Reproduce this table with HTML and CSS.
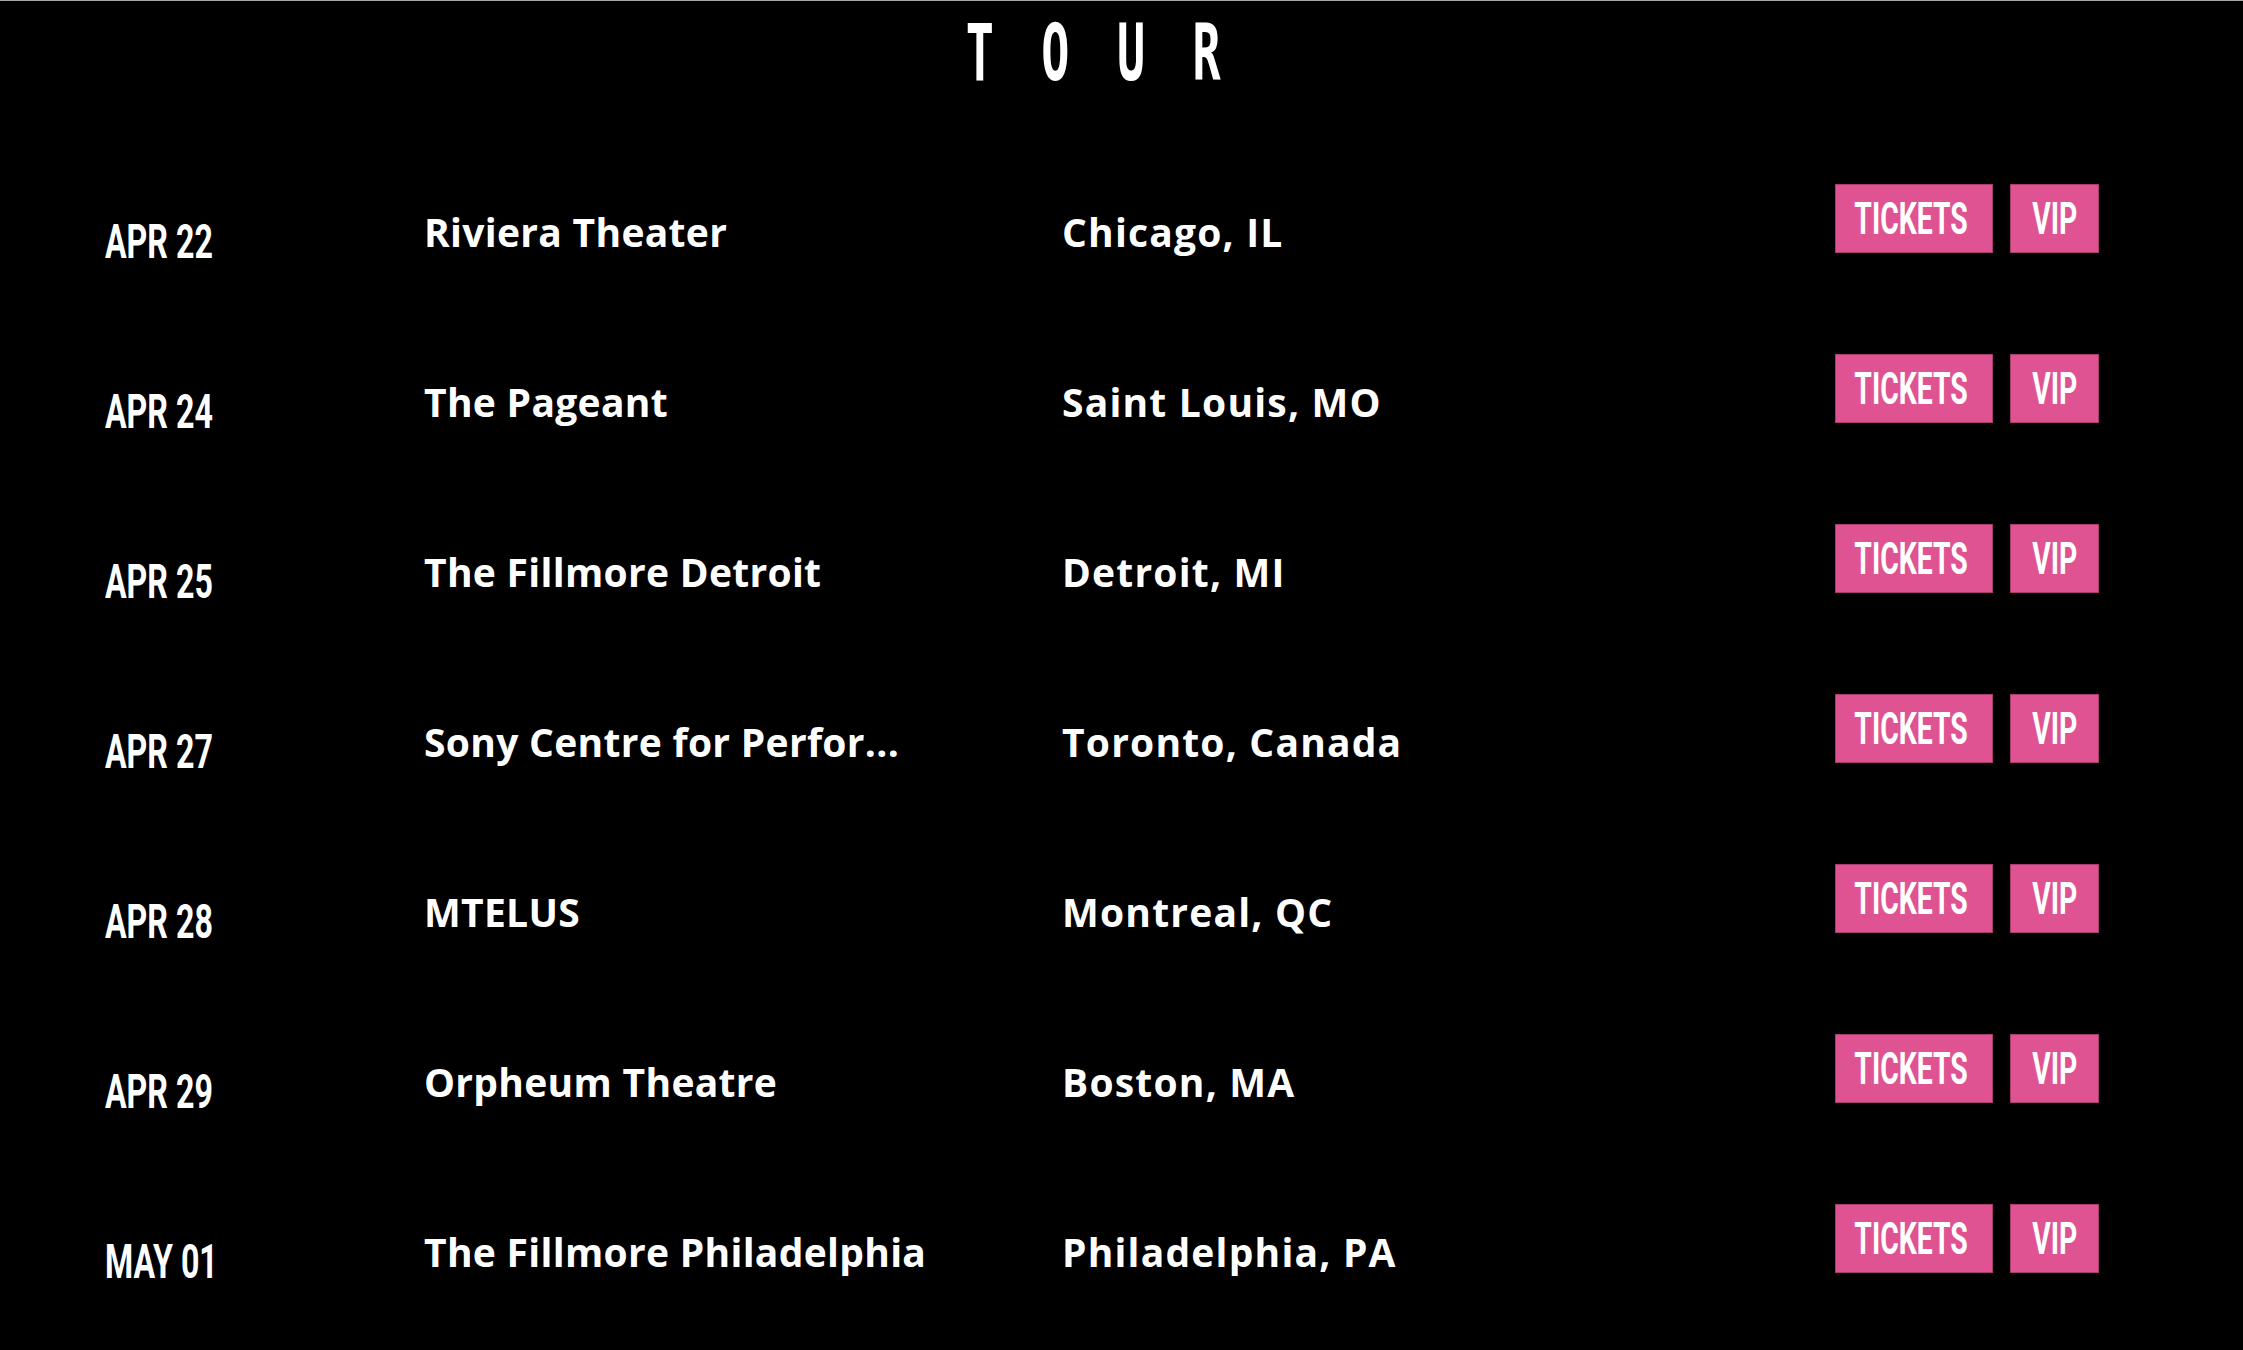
FILE: index.html
```html
<!DOCTYPE html>
<html lang="en">
<head>
<meta charset="utf-8">
<title>Tour</title>
<link rel="stylesheet" href="styles.css">
</head>
<body>
<div class="page">
  <h1 class="title"><span class="title-text">TOUR</span></h1>
  <div class="list">
    <div class="row">
      <div class="date"><span class="cond">APR 22</span></div>
      <div class="venue">Riviera Theater</div>
      <div class="city">Chicago, IL</div>
      <div class="actions"><a class="btn btn-tickets"><span class="cond-c">TICKETS</span></a><a class="btn btn-vip"><span class="cond-c">VIP</span></a></div>
    </div>
    <div class="row">
      <div class="date"><span class="cond">APR 24</span></div>
      <div class="venue">The Pageant</div>
      <div class="city">Saint Louis, MO</div>
      <div class="actions"><a class="btn btn-tickets"><span class="cond-c">TICKETS</span></a><a class="btn btn-vip"><span class="cond-c">VIP</span></a></div>
    </div>
    <div class="row">
      <div class="date"><span class="cond">APR 25</span></div>
      <div class="venue">The Fillmore Detroit</div>
      <div class="city">Detroit, MI</div>
      <div class="actions"><a class="btn btn-tickets"><span class="cond-c">TICKETS</span></a><a class="btn btn-vip"><span class="cond-c">VIP</span></a></div>
    </div>
    <div class="row">
      <div class="date"><span class="cond">APR 27</span></div>
      <div class="venue">Sony Centre for Perfor...</div>
      <div class="city">Toronto, Canada</div>
      <div class="actions"><a class="btn btn-tickets"><span class="cond-c">TICKETS</span></a><a class="btn btn-vip"><span class="cond-c">VIP</span></a></div>
    </div>
    <div class="row">
      <div class="date"><span class="cond">APR 28</span></div>
      <div class="venue">MTELUS</div>
      <div class="city">Montreal, QC</div>
      <div class="actions"><a class="btn btn-tickets"><span class="cond-c">TICKETS</span></a><a class="btn btn-vip"><span class="cond-c">VIP</span></a></div>
    </div>
    <div class="row">
      <div class="date"><span class="cond">APR 29</span></div>
      <div class="venue">Orpheum Theatre</div>
      <div class="city">Boston, MA</div>
      <div class="actions"><a class="btn btn-tickets"><span class="cond-c">TICKETS</span></a><a class="btn btn-vip"><span class="cond-c">VIP</span></a></div>
    </div>
    <div class="row">
      <div class="date"><span class="cond">MAY 01</span></div>
      <div class="venue">The Fillmore Philadelphia</div>
      <div class="city">Philadelphia, PA</div>
      <div class="actions"><a class="btn btn-tickets"><span class="cond-c">TICKETS</span></a><a class="btn btn-vip"><span class="cond-c">VIP</span></a></div>
    </div>
  </div>
</div>
</body>
</html>
```
FILE: styles.css
```css
html, body {
  margin: 0;
  padding: 0;
  background: #000;
  color: #fff;
}

.page {
  border-top: 1px solid #a8a8a8;
  background: #000;
}

.title {
  margin: 0;
  padding: 13px 0 92px;
  text-align: center;
  font-family: "DejaVu Sans Mono", monospace;
  font-weight: 700;
  font-size: 78px;
  line-height: 78px;
}

.title-text {
  display: inline-block;
  letter-spacing: 79px;
  margin-right: 10px;
  transform: scaleX(0.6);
  transform-origin: center;
}

.list {
  display: flex;
  flex-direction: column;
}

.row {
  display: grid;
  grid-template-columns: 319px 638px 1fr auto;
  height: 170px;
  padding: 0 144px 0 105px;
  align-items: start;
}

.date {
  padding-top: 34px;
  font-family: Roboto, "Liberation Sans", sans-serif;
  font-weight: 700;
  font-size: 48px;
  line-height: 48px;
  white-space: nowrap;
}

.cond {
  display: inline-block;
  transform: scaleX(0.67);
  transform-origin: left center;
}

.venue,
.city {
  padding-top: 26px;
  font-family: "Open Sans", "Liberation Sans", sans-serif;
  font-weight: 700;
  font-size: 39px;
  line-height: 44px;
  white-space: nowrap;
}

.venue {
  letter-spacing: 0.3px;
}

.city {
  letter-spacing: 1.2px;
}

.actions {
  display: flex;
  gap: 17px;
}

.btn {
  display: flex;
  align-items: center;
  justify-content: center;
  box-sizing: border-box;
  height: 69px;
  background: #e05393;
  border: 1px solid #a83c6c;
  color: #fff;
  font-family: Roboto, "Liberation Sans", sans-serif;
  font-weight: 700;
  font-size: 45px;
  line-height: 45px;
  white-space: nowrap;
  overflow: hidden;
}

.btn-tickets {
  width: 158px;
  padding-right: 5px;
}

.btn-vip {
  width: 89px;
}

.cond-c {
  display: inline-block;
  transform: scaleX(0.63);
  transform-origin: center;
}
```
